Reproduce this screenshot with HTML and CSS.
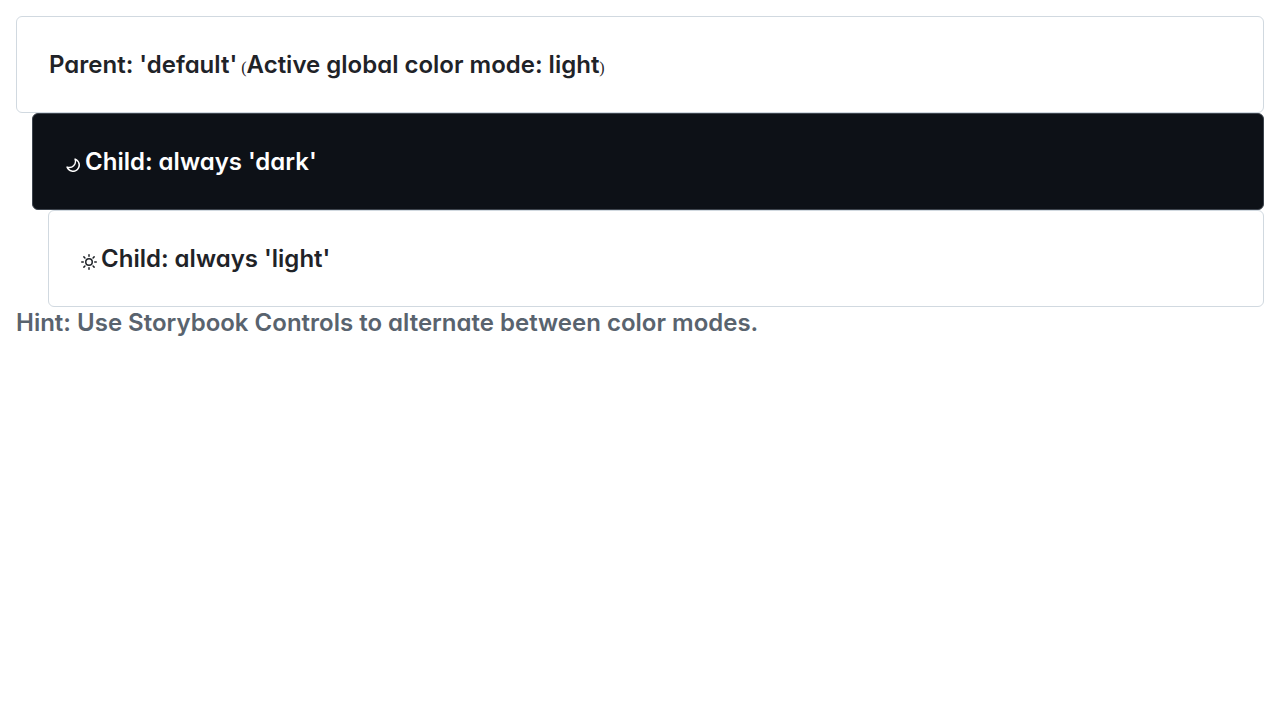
FILE: index.html
```html
<!DOCTYPE html>
<html lang="en">
<head>
<meta charset="utf-8">
<title>Color modes</title>
<link rel="stylesheet" href="styles.css">
</head>
<body>
<main>
  <div class="box"><span class="text">Parent: 'default'</span> (<span class="text">Active global color mode: light</span>)</div>
  <div class="nested">
    <div class="box dark"><svg class="icon" viewBox="0 0 16 16" aria-hidden="true"><path fill="currentColor" fill-rule="evenodd" d="M9.598 1.591a.749.749 0 0 1 .785-.175 7.001 7.001 0 1 1-8.967 8.967.75.75 0 0 1 .961-.96 5.5 5.5 0 0 0 7.046-7.046.75.75 0 0 1 .175-.786Zm1.616 1.945a7 7 0 0 1-7.678 7.678 5.499 5.499 0 1 0 7.678-7.678Z"/></svg> <span class="text">Child: always 'dark'</span></div>
    <div class="nested">
      <div class="box"><svg class="icon" viewBox="0 0 16 16" aria-hidden="true"><g fill="none" stroke="currentColor" stroke-width="1.5" stroke-linecap="round"><circle cx="8" cy="8" r="3.25"/><path d="M8 .75v1.5M8 13.75v1.5M.75 8h1.5M13.75 8h1.5M2.873 2.873l1.06 1.06M12.066 12.066l1.06 1.06M2.873 13.127l1.06-1.06M12.066 3.934l1.06-1.06"/></g></svg> <span class="text">Child: always 'light'</span></div>
    </div>
  </div>
  <p class="text hint">Hint: Use Storybook Controls to alternate between color modes.</p>
</main>
</body>
</html>
```
FILE: styles.css
```css
body {
  margin: 0;
  padding: 16px;
  background: #fff;
  color: #1f2328;
  font: 16px "Liberation Serif", serif;
}
.box {
  padding: 32px;
  border: 1px solid #d1d9e0;
  border-radius: 6px;
  background: #fff;
  line-height: 18px;
}
.dark {
  border-color: #3d444d;
  background: #0d1117;
  color: #fff;
}
.nested {
  margin-left: 16px;
}
.text {
  font-family: Inter, sans-serif;
  font-size: 24px;
  font-weight: 600;
  font-feature-settings: "cv11";
  line-height: 31px;
}
.icon {
  width: 16px;
  height: 16px;
  vertical-align: text-bottom;
}
.hint {
  margin: 0;
  color: #59636e;
}
```
